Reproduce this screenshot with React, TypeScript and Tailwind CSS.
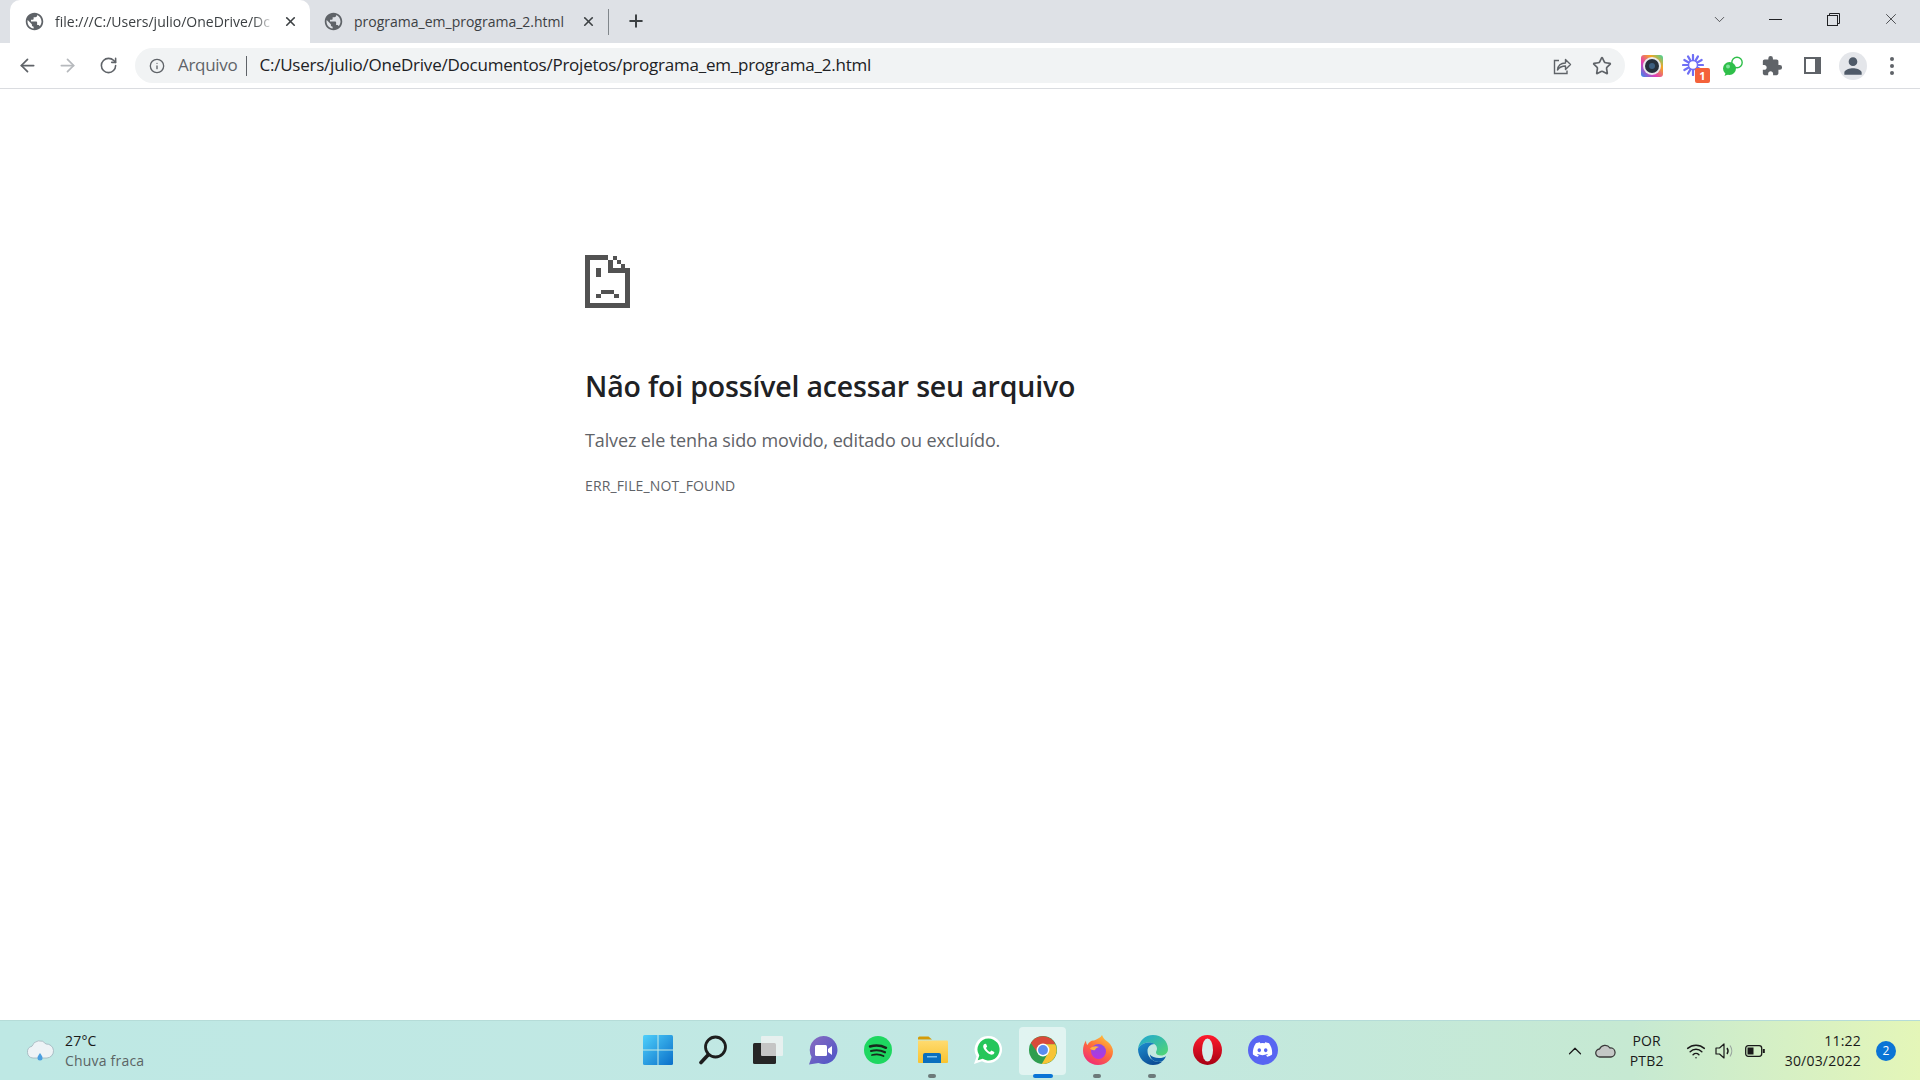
import { ArrowLeft, ArrowRight, RotateCw, Info, Star, Plus, X, ChevronDown, ChevronUp, Wifi } from "lucide-react";
import { MdExtension, MdPublic, MdPerson } from "react-icons/md";
import { FaDiscord } from "react-icons/fa";
import type { ReactNode } from "react";

const ui = "font-['Open_Sans','Noto_Sans',sans-serif]";

function Tab({ title, active, width }: { title: string; active?: boolean; width: string }) {
  return (
    <div className={`${width} h-[43px] flex items-center shrink-0 ${active ? "bg-white rounded-t-[10px] pl-[14px] pr-[12px]" : "pl-[13px] pr-[12px]"}`}>
      <MdPublic size={21} className="text-[#5f6368] shrink-0" />
      <div className={`ml-[10px] flex-1 overflow-hidden whitespace-nowrap text-[14px] text-[#3c4043] ${active ? "[mask-image:linear-gradient(to_right,black_90%,transparent)]" : ""}`}>
        {title}
      </div>
      <X size={15} strokeWidth={2.6} className="text-[#3c4043] shrink-0 ml-[8px]" />
    </div>
  );
}

function WindowButtons() {
  return (
    <div className="ml-auto flex items-center h-[38px] text-[#202124] self-start">
      <ChevronDown size={17} strokeWidth={1} className="mr-[41px]" />
      <div className="w-[13px] h-px bg-[#202124] mr-[45px]" />
      <svg width="13" height="13" viewBox="0 0 13 13" fill="none" stroke="#202124" className="mr-[42px]">
        <rect x="0.5" y="2.5" width="10" height="10" />
        <path d="M2.5 2.5V.5h10v10h-2" />
      </svg>
      <X size={18} strokeWidth={1} className="mr-[20px]" />
    </div>
  );
}

function ShareIcon() {
  return (
    <svg width="20" height="20" viewBox="0 0 20 20" fill="none" stroke="#5f6368" strokeWidth="1.4">
      <path d="M7 4.5H2.5v13h12.5v-3" />
      <path d="M5.5 14c.5-4.500 3.500-7 8-7V3.500l5 5-5 5V10c-3.500 0-6 1-8 4z" strokeLinejoin="round" />
    </svg>
  );
}

function CameraExt() {
  return (
    <svg width="22" height="22" viewBox="0 0 22 22">
      <defs>
        <linearGradient id="cam" x1="0" y1="1" x2="1" y2="0">
          <stop offset="0" stopColor="#2d8cf0" />
          <stop offset="0.35" stopColor="#e23bb5" />
          <stop offset="0.7" stopColor="#f5a623" />
          <stop offset="1" stopColor="#36d6a0" />
        </linearGradient>
      </defs>
      <rect width="22" height="22" rx="3" fill="url(#cam)" />
      <circle cx="11" cy="11" r="9" fill="#e8eaed" />
      <circle cx="11" cy="11" r="7" fill="#26303c" />
      <circle cx="11" cy="11" r="3" fill="#3d5f80" />
    </svg>
  );
}

function StarburstExt() {
  const spokes = [0, 30, 60, 90, 120, 150];
  return (
    <div className="relative w-[24px] h-[24px]">
      <svg width="22" height="22" viewBox="0 0 22 22" stroke="#6f6ff5" strokeWidth="2.2" strokeLinecap="round">
        {spokes.map((a) => (
          <line key={a} x1="11" y1="1" x2="11" y2="21" transform={`rotate(${a} 11 11)`} />
        ))}
        <circle cx="11" cy="11" r="4.5" fill="#fff" stroke="#6f6ff5" strokeWidth="1.5" />
      </svg>
      <div className="absolute right-[-4px] bottom-[-5px] w-[15px] h-[15px] rounded-[2px] bg-[#f4623a] text-white text-[11px] font-bold leading-[15px] text-center">1</div>
    </div>
  );
}

function ChatExt() {
  return (
    <svg width="22" height="22" viewBox="0 0 22 22">
      <circle cx="15" cy="7.5" r="5.2" fill="none" stroke="#2fbf4a" strokeWidth="1.4" />
      <circle cx="7.5" cy="13.5" r="6.5" fill="#2fbf4a" />
      <path d="M2.500 21l1.500-4 3 2z" fill="#2fbf4a" />
      <circle cx="6" cy="11.5" r="2" fill="#7fe39a" />
    </svg>
  );
}

function SidePanelIcon() {
  return (
    <div className="w-[17px] h-[17px] bg-[#5f6368] p-[2px] flex">
      <div className="w-[9px] h-full bg-white" />
    </div>
  );
}

function Toolbar() {
  return (
    <div className="h-[46px] flex items-center border-b border-[#dadce0] bg-white shrink-0">
      <ArrowLeft size={21} strokeWidth={2} className="text-[#5f6368] ml-[17px]" />
      <ArrowRight size={21} strokeWidth={2} className="text-[#b6b9bd] ml-[19px]" />
      <RotateCw size={19} strokeWidth={2} className="text-[#5f6368] ml-[21px]" />
      <div className="ml-[17px] w-[1490px] h-[35px] rounded-full bg-[#f1f3f4] flex items-center">
        <Info size={16} strokeWidth={2} className="text-[#5f6368] ml-[14px]" />
        <span className="ml-[13px] pb-[1px] text-[#5f6368] text-[17px] tracking-[-0.3px]">Arquivo</span>
        <div className="w-px h-[20px] bg-[#5f6368] ml-[9px]" />
        <span className="ml-[12px] pb-[1px] text-[#202124] text-[17px] tracking-[-0.23px] whitespace-nowrap">C:/Users/julio/OneDrive/Documentos/Projetos/programa_em_programa_2.html</span>
        <div className="ml-auto flex items-center">
          <ShareIcon />
          <Star size={20} strokeWidth={2} className="text-[#5f6368] ml-[20px] mr-[13px]" />
        </div>
      </div>
      <div className="ml-[16px] flex items-center">
        <CameraExt />
        <div className="ml-[19px]"><StarburstExt /></div>
        <div className="ml-[16px]"><ChatExt /></div>
        <MdExtension size={22} className="text-[#5f6368] ml-[17px]" />
        <div className="ml-[21px]"><SidePanelIcon /></div>
        <div className="ml-[18px] w-[28px] h-[28px] rounded-full bg-[#e4e6ea] flex items-center justify-center">
          <MdPerson size={26} className="text-[#4f5a68]" />
        </div>
        <div className="ml-[23px] flex flex-col gap-[3px]">
          <div className="w-[4px] h-[4px] rounded-full bg-[#5f6368]" />
          <div className="w-[4px] h-[4px] rounded-full bg-[#5f6368]" />
          <div className="w-[4px] h-[4px] rounded-full bg-[#5f6368]" />
        </div>
      </div>
    </div>
  );
}

function SadFile() {
  return (
    <svg width="45" height="53" viewBox="0 0 45 53" fill="#525252" shapeRendering="crispEdges">
      <path fillRule="evenodd" d="M0 0h28v5H5v43h35V18H23V0h5v13h17v40H0z" />
      <rect x="28" y="1" width="4" height="4" />
      <rect x="32" y="5" width="4" height="4" />
      <rect x="36" y="9" width="4" height="4" />
      <rect x="11" y="13" width="5" height="9" />
      <rect x="16" y="35" width="13" height="4" />
      <rect x="11" y="39" width="5" height="4" />
      <rect x="29" y="39" width="5" height="4" />
    </svg>
  );
}

function WinLogo() {
  return (
    <svg width="30" height="30" viewBox="0 0 30 30">
      <defs>
        <linearGradient id="win" x1="0" y1="0" x2="1" y2="1">
          <stop offset="0" stopColor="#4fd0fb" />
          <stop offset="1" stopColor="#0a6fc9" />
        </linearGradient>
      </defs>
      <rect width="30" height="30" rx="1.5" fill="url(#win)" />
      <path d="M14.500 0h1v30h-1zM0 14.500h30v1H0z" fill="#c5ebe6" />
    </svg>
  );
}

function SearchIcon() {
  return (
    <svg width="30" height="30" viewBox="0 0 30 30" fill="none" stroke="#1d1d1d">
      <circle cx="17.5" cy="12" r="10" strokeWidth="2.8" />
      <path d="M10 20L3 27.500" strokeWidth="3.6" strokeLinecap="round" />
    </svg>
  );
}

function TaskView() {
  return (
    <svg width="30" height="30" viewBox="0 0 30 30">
      <rect x="0" y="8" width="23" height="21" rx="1.5" fill="#262626" />
      <rect x="8" y="1" width="22" height="20" rx="1" fill="#f2f2f2" fillOpacity="0.78" />
    </svg>
  );
}

function ChatIcon() {
  return (
    <svg width="30" height="30" viewBox="0 0 30 30">
      <defs>
        <linearGradient id="teams" x1="0" y1="0" x2="1" y2="1">
          <stop offset="0" stopColor="#8a6cc0" />
          <stop offset="1" stopColor="#4b54c8" />
        </linearGradient>
      </defs>
      <path d="M15.500 1a14 14 0 1 1-5 27.100L1 29.500l2.600-7.500A14 14 0 0 1 15.500 1z" fill="url(#teams)" />
      <rect x="7" y="10" width="12" height="11" rx="1.5" fill="#fff" />
      <path d="M20 14l4-3v9l-4-3z" fill="#fff" />
    </svg>
  );
}

function SpotifyIcon() {
  return (
    <svg width="28" height="28" viewBox="0 0 28 28" fill="none" stroke="#17291d" strokeLinecap="round">
      <circle cx="14" cy="14" r="14" fill="#1ed760" stroke="none" />
      <path d="M6 10.500c5-1.500 11.500-1 16 1.300" strokeWidth="2.5" />
      <path d="M7 15c4.500-1.200 10-.8 14 1.300" strokeWidth="2.1" />
      <path d="M8 19c4-1 8.500-.6 11.500 1" strokeWidth="1.8" />
    </svg>
  );
}

function FolderIcon() {
  return (
    <svg width="30" height="28" viewBox="0 0 30 28">
      <defs>
        <linearGradient id="folder" x1="0" y1="0" x2="0" y2="1">
          <stop offset="0" stopColor="#ffdb70" />
          <stop offset="1" stopColor="#f9c32f" />
        </linearGradient>
      </defs>
      <path d="M0 2a1.500 1.500 0 0 1 1.500-1.500h9L14 3.500H0z" fill="#d59b07" />
      <path d="M0 4.500h29a1 1 0 0 1 1 1V26a1 1 0 0 1-1 1H1a1 1 0 0 1-1-1z" fill="url(#folder)" />
      <path d="M5 27v-8a2 2 0 0 1 2-2h14a2 2 0 0 1 2 2v8z" fill="#0a6fbe" />
      <rect x="9" y="20" width="10" height="1.500" fill="#7cc4f0" />
    </svg>
  );
}

function WhatsIcon() {
  return (
    <svg width="28" height="28" viewBox="0 0 28 28">
      <path d="M14.500 0a13.500 13.500 0 1 1-6.500 25.300L0 28l2.600-7.500A13.500 13.500 0 0 1 14.500 0z" fill="#fff" />
      <path d="M14.500 2.500a11 11 0 1 1-5.800 20.300l-5 1.500 1.600-4.800A11 11 0 0 1 14.500 2.500z" fill="#25c65a" />
      <path d="M10.500 8c-2 1.500-1.500 4 .8 6.800s5 4.300 7.200 3.700c1.500-.4 2-1.800 1.800-2.600l-3-1.500-1.300 1.500c-1.500-.4-3.300-2.300-4-4l1.200-1.300-1.200-2.800z" fill="#fff" />
    </svg>
  );
}

function ChromeLogo() {
  return (
    <svg width="28" height="28" viewBox="0 0 48 48">
      <circle cx="24" cy="24" r="24" fill="#2f9e4f" />
      <path d="M3.200 12L15.300 29A10 10 0 0 1 24 14H45.200A24 24 0 0 0 3.200 12z" fill="#d94a3a" />
      <path d="M45.200 14H24A10 10 0 0 1 32.700 29L22 48A24 24 0 0 0 45.200 14z" fill="#f7c436" />
      <circle cx="24" cy="24" r="11" fill="#fff" />
      <circle cx="24" cy="24" r="8.500" fill="#5a8df0" />
    </svg>
  );
}

function FirefoxLogo() {
  return (
    <svg width="30" height="30" viewBox="0 0 30 30">
      <defs>
        <linearGradient id="ffo" x1="0.8" y1="0" x2="0.2" y2="1">
          <stop offset="0" stopColor="#ffc83a" />
          <stop offset="0.45" stopColor="#ff7139" />
          <stop offset="1" stopColor="#f0267a" />
        </linearGradient>
        <linearGradient id="ffp" x1="0.5" y1="0" x2="0.5" y2="1">
          <stop offset="0" stopColor="#8a4ee0" />
          <stop offset="1" stopColor="#b833e1" />
        </linearGradient>
      </defs>
      <path d="M19 0c1 3 3 5 6 7 3 2.500 5 6 5 9.500C30 24 23.500 30 15 30 6.500 30 0 23.500 0 15.500 0 12 1 8 3 5.500c0 2 .5 3.500 1.500 4.500C6 6.500 9 5 11 5.500c3-1.500 6.500-2.500 8-5.500z" fill="url(#ffo)" />
      <circle cx="15.500" cy="16.500" r="7.500" fill="url(#ffp)" />
      <path d="M7 13.500c2.500-2.500 6-3 9-1.500-2 .5-3.500 1.500-4 3-1.500.5-3.500 0-5-1.500z" fill="#ffb340" />
    </svg>
  );
}

function EdgeLogo() {
  return (
    <svg width="30" height="30" viewBox="0 0 30 30">
      <defs>
        <linearGradient id="edge1" x1="0" y1="0" x2="1" y2="1">
          <stop offset="0" stopColor="#1fa5d8" />
          <stop offset="1" stopColor="#53d86f" />
        </linearGradient>
        <linearGradient id="edge2" x1="0" y1="0" x2="0.6" y2="1">
          <stop offset="0" stopColor="#1c8fd0" />
          <stop offset="1" stopColor="#0c4c94" />
        </linearGradient>
      </defs>
      <path d="M15 0c8.500 0 15 6 15 14 0 4-3 6.500-7 6.500-3 0-5-1-5-3 0-1.500 1-2 1-4 0-3-3-6-8-6C6 7.500 2 10 0 14 1 6 7 0 15 0z" fill="url(#edge1)" />
      <path d="M0 14c2-4 6-6.500 11-6.500 2 0 4 .5 5.500 1.500-4 0-7 3-7 7 0 6 5 11 12 11 1 0 2-.2 3-.5-2.500 2.500-6 3.500-9.500 3.500C7 30 0 23 0 14z" fill="url(#edge2)" />
      <path d="M21 27c-5 0-9-3-9-7.500 1.500 2 5 3.500 9 3.500 3 0 5.500-.5 7-2-1 3-3.500 6-7 6z" fill="#0e5ea8" />
    </svg>
  );
}

function OperaLogo() {
  return (
    <svg width="29" height="30" viewBox="0 0 29 30">
      <defs>
        <linearGradient id="op" x1="0" y1="0" x2="0" y2="1">
          <stop offset="0" stopColor="#ff1b2d" />
          <stop offset="1" stopColor="#a70014" />
        </linearGradient>
      </defs>
      <ellipse cx="14.500" cy="15" rx="14.500" ry="15" fill="url(#op)" />
      <ellipse cx="14.500" cy="15" rx="5.500" ry="11.500" fill="#d6eeec" />
    </svg>
  );
}

function TaskSlot({ children, state }: { children: ReactNode; state?: "open" | "active" }) {
  return (
    <div className="relative w-[55px] h-[60px] flex items-center justify-center">
      {state === "active" && <div className="absolute left-[4px] right-[4px] top-[6px] bottom-[6px] rounded-[4px] bg-white/50" />}
      <div className="relative pb-[3px]">{children}</div>
      {state === "open" && <div className="absolute bottom-[3px] left-[23px] w-[8px] h-[4px] rounded-full bg-[#6c7a7a]" />}
      {state === "active" && <div className="absolute bottom-[3px] left-[18px] w-[20px] h-[4px] rounded-full bg-[#0a74d6]" />}
    </div>
  );
}

function Taskbar() {
  return (
    <div className="h-[60px] shrink-0 grid grid-cols-[1fr_auto_1fr] items-center bg-[linear-gradient(to_right,#bee8e4_0%,#c2e8e3_55%,#c6e9d2_85%,#e4f6b8_100%)] border-t border-[#b5dcd8]">
      <div className="flex items-center pl-[26px]">
        <svg width="28" height="26" viewBox="0 0 28 26">
          <path d="M7 20a6 6 0 0 1-1-11.800A8 8 0 0 1 20 6a7 7 0 0 1 1 14z" fill="#eef3f6" stroke="#9fb3bb" strokeWidth="0.8" />
          <path d="M14 15c1.500 2 2.500 3.500 2.500 5a2.500 2.500 0 0 1-5 0c0-1.500 1-3 2.500-5z" fill="#4a9fe0" />
        </svg>
        <div className="ml-[11px] text-[14px] leading-[20px] tracking-[0.2px]">
          <div className="text-[#1a1a1a]">27°C</div>
          <div className="text-[#5b6464]">Chuva fraca</div>
        </div>
      </div>
      <div className="flex">
        <TaskSlot><WinLogo /></TaskSlot>
        <TaskSlot><SearchIcon /></TaskSlot>
        <TaskSlot><TaskView /></TaskSlot>
        <TaskSlot><ChatIcon /></TaskSlot>
        <TaskSlot><SpotifyIcon /></TaskSlot>
        <TaskSlot state="open"><FolderIcon /></TaskSlot>
        <TaskSlot><WhatsIcon /></TaskSlot>
        <TaskSlot state="active"><ChromeLogo /></TaskSlot>
        <TaskSlot state="open"><FirefoxLogo /></TaskSlot>
        <TaskSlot state="open"><EdgeLogo /></TaskSlot>
        <TaskSlot><OperaLogo /></TaskSlot>
        <TaskSlot>
          <div className="w-[30px] h-[30px] rounded-full bg-[#5865f2] flex items-center justify-center">
            <FaDiscord size={21} className="text-white" />
          </div>
        </TaskSlot>
      </div>
      <div className="flex items-center justify-end pr-[24px] text-[#1a1a1a] text-[14px] leading-[20px] tracking-[0.2px]">
        <ChevronUp size={22} strokeWidth={1.3} />
        <svg width="21" height="14" viewBox="0 0 21 14" className="ml-[9px]">
          <path d="M5 13a4 4 0 0 1-.5-8A6 6 0 0 1 15 4a4.500 4.500 0 0 1 1 9z" fill="#c4c8c6" stroke="#3a3a3a" strokeWidth="1.300" />
        </svg>
        <div className="ml-[13px] w-[36px] text-center">
          <div>POR</div>
          <div>PTB2</div>
        </div>
        <Wifi size={20} strokeWidth={1.8} className="ml-[21px]" />
        <svg width="22" height="20" viewBox="0 0 22 20" fill="none" stroke="#1a1a1a" strokeWidth="1.200" className="ml-[8px]">
          <path d="M2 7h3.500L10 3v14l-4.500-4H2z" strokeLinejoin="round" />
          <path d="M13 7c1.300 1.800 1.300 4.200 0 6" strokeWidth="1.400" />
          <path d="M16 4.500c2.300 3.200 2.300 7.800 0 11" stroke="#9aa5a0" />
        </svg>
        <svg width="20" height="12" viewBox="0 0 20 12" className="ml-[9px]">
          <rect x="0.700" y="0.700" width="16" height="10.600" rx="2.500" fill="none" stroke="#1a1a1a" strokeWidth="1.300" />
          <rect x="2.500" y="2.500" width="6" height="7" fill="#1a1a1a" />
          <rect x="17.800" y="4" width="2" height="4" fill="#1a1a1a" />
        </svg>
        <div className="ml-[20px] text-right">
          <div>11:22</div>
          <div>30/03/2022</div>
        </div>
        <div className="ml-[15px] w-[20px] h-[20px] rounded-full bg-[#0a74d6] text-white text-[12px] leading-[20px] text-center">2</div>
      </div>
    </div>
  );
}

export default function App() {
  return (
    <div className={`${ui} w-[1920px] h-[1080px] flex flex-col bg-white overflow-hidden`}>
      <div className="h-[43px] bg-[#dee1e6] flex pl-[10px] shrink-0">
        <Tab active title="file:///C:/Users/julio/OneDrive/Dc" width="w-[300px]" />
        <Tab title="programa_em_programa_2.html" width="w-[298px]" />
        <div className="w-px h-[26px] bg-[#80868b] mt-[9px]" />
        <Plus size={20} strokeWidth={2.4} className="text-[#3c4043] ml-[17px] mt-[11px]" />
        <WindowButtons />
      </div>
      <Toolbar />
      <main className="flex-1 pl-[585px] pt-[166px]">
        <SadFile />
        <h1 className="mt-[60px] text-[28.5px] leading-[36px] font-semibold text-[#202124] tracking-[-0.18px]">Não foi possível acessar seu arquivo</h1>
        <p className="mt-[18px] text-[18px] leading-[36px] text-[#5f6368] tracking-[-0.12px]">Talvez ele tenha sido movido, editado ou excluído.</p>
        <p className="mt-[19px] text-[14px] leading-[18px] text-[#5f6368] tracking-[0.14px]">ERR_FILE_NOT_FOUND</p>
      </main>
      <Taskbar />
    </div>
  );
}
